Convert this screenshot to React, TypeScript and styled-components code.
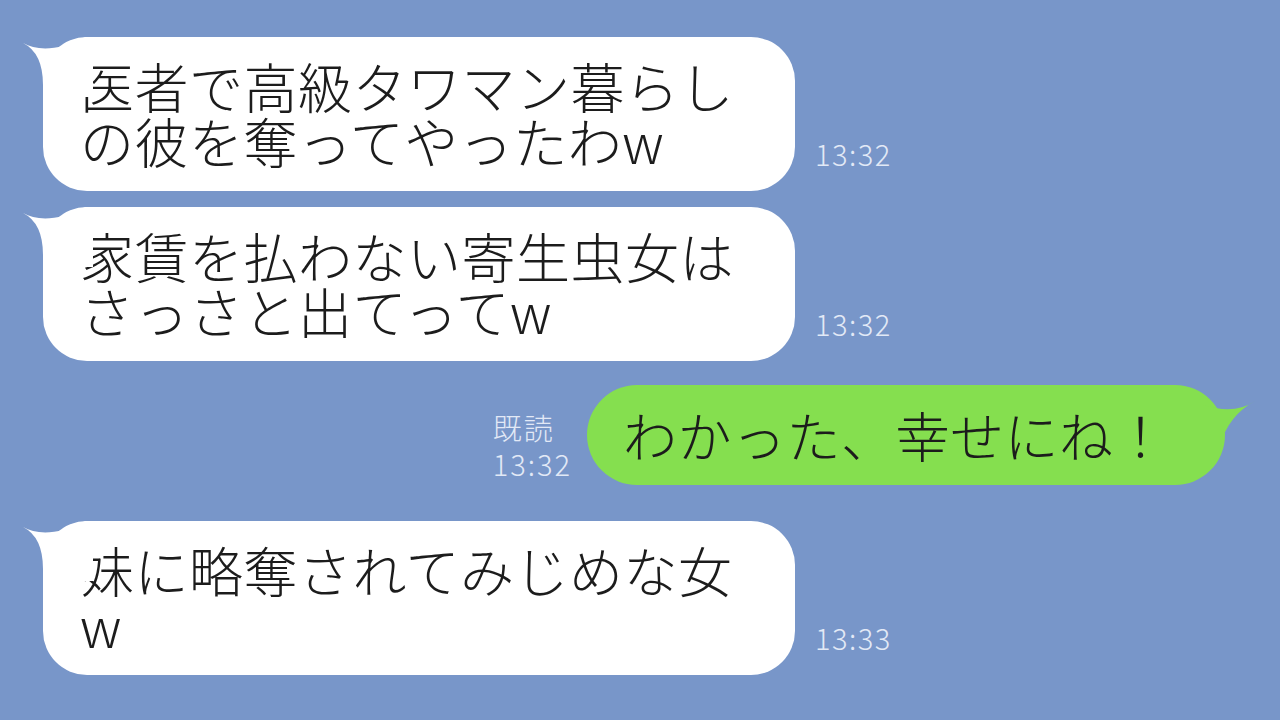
import React from 'react';
import styled, { createGlobalStyle } from 'styled-components';

const GlobalStyle = createGlobalStyle`
  html, body {
    margin: 0;
    padding: 0;
    background: #7896c9;
  }
  body {
    font-family: "Noto Sans CJK JP", "Noto Sans", sans-serif;
  }
`

const Screen = styled.div`
  width: 1280px;
  height: 720px;
  overflow: hidden;
  box-sizing: border-box;
  padding: 37px 55px 0 43px;
  display: flex;
  flex-direction: column;
`

const Row = styled.div<{ $top: number; $mine?: boolean }>`
  display: flex;
  align-items: flex-end;
  justify-content: ${p => (p.$mine ? 'flex-end' : 'flex-start')};
  gap: ${p => (p.$mine ? 15 : 20)}px;
  margin-top: ${p => p.$top}px;
`

const Bubble = styled.div<{ $mine?: boolean }>`
  position: relative;
  box-sizing: border-box;
  background: ${p => (p.$mine ? '#85df4f' : '#ffffff')};
  color: #1c1c1c;
  font-size: 54px;
  font-weight: 300;
  line-height: 55px;
  letter-spacing: 0.5px;
  border-radius: ${p => (p.$mine ? 50 : 44)}px;
  width: ${p => (p.$mine ? 'auto' : '752px')};
  padding: ${p => (p.$mine ? '22px 57px 23px 36px' : '21px 20px 23px 37px')};
  white-space: nowrap;
`

const TailSvg = styled.svg<{ $mine?: boolean }>`
  position: absolute;
  top: 0;
  ${p => (p.$mine ? 'right: -30px;' : 'left: -20px;')}
  width: 70px;
  height: 60px;
  overflow: visible;
`

const Meta = styled.div<{ $mine?: boolean }>`
  color: #e2e9f6;
  font-size: 29px;
  font-weight: 300;
  line-height: 36px;
  letter-spacing: ${p => (p.$mine ? 2 : 1.5)}px;
  margin-bottom: ${p => (p.$mine ? 4 : 20)}px;
  white-space: nowrap;
`

const Tail = ({ mine }: { mine?: boolean }) =>
  mine ? (
    <TailSvg $mine viewBox="-40 0 70 60">
      <path d="M30 16 Q10 30 -22 20 L-22 60 L-5 60 Q4 30 30 16 Z" fill="#85df4f" />
    </TailSvg>
  ) : (
    <TailSvg viewBox="-20 0 70 60">
      <path d="M-20 6 C-6 14 16 14 42 0 L50 0 L50 60 L0 60 L0 48 Q0 16 -20 6 Z" fill="#ffffff" />
    </TailSvg>
  )

type TMsg = {
  lines: string[]
  time: string
  top: number
}

const Incoming: React.FC<TMsg> = ({ lines, time, top }) => (
  <Row $top={top}>
    <Bubble>
      <Tail />
      {lines.map((l, i) => (
        <div key={i}>{l}</div>
      ))}
    </Bubble>
    <Meta>{time}</Meta>
  </Row>
)

export default function App() {
  return (
    <Screen>
      <GlobalStyle />
      <Incoming top={0} lines={['医者で高級タワマン暮らし', 'の彼を奪ってやったわw']} time="13:32" />
      <Incoming top={16} lines={['家賃を払わない寄生虫女は', 'さっさと出てってw']} time="13:32" />
      <Row $top={24} $mine>
        <Meta $mine>
          <div>既読</div>
          <div>13:32</div>
        </Meta>
        <Bubble $mine>
          <Tail mine />
          わかった、幸せにね！
        </Bubble>
      </Row>
      <Incoming top={36} lines={['妹に略奪されてみじめな女', 'w']} time="13:33" />
    </Screen>
  );
}
